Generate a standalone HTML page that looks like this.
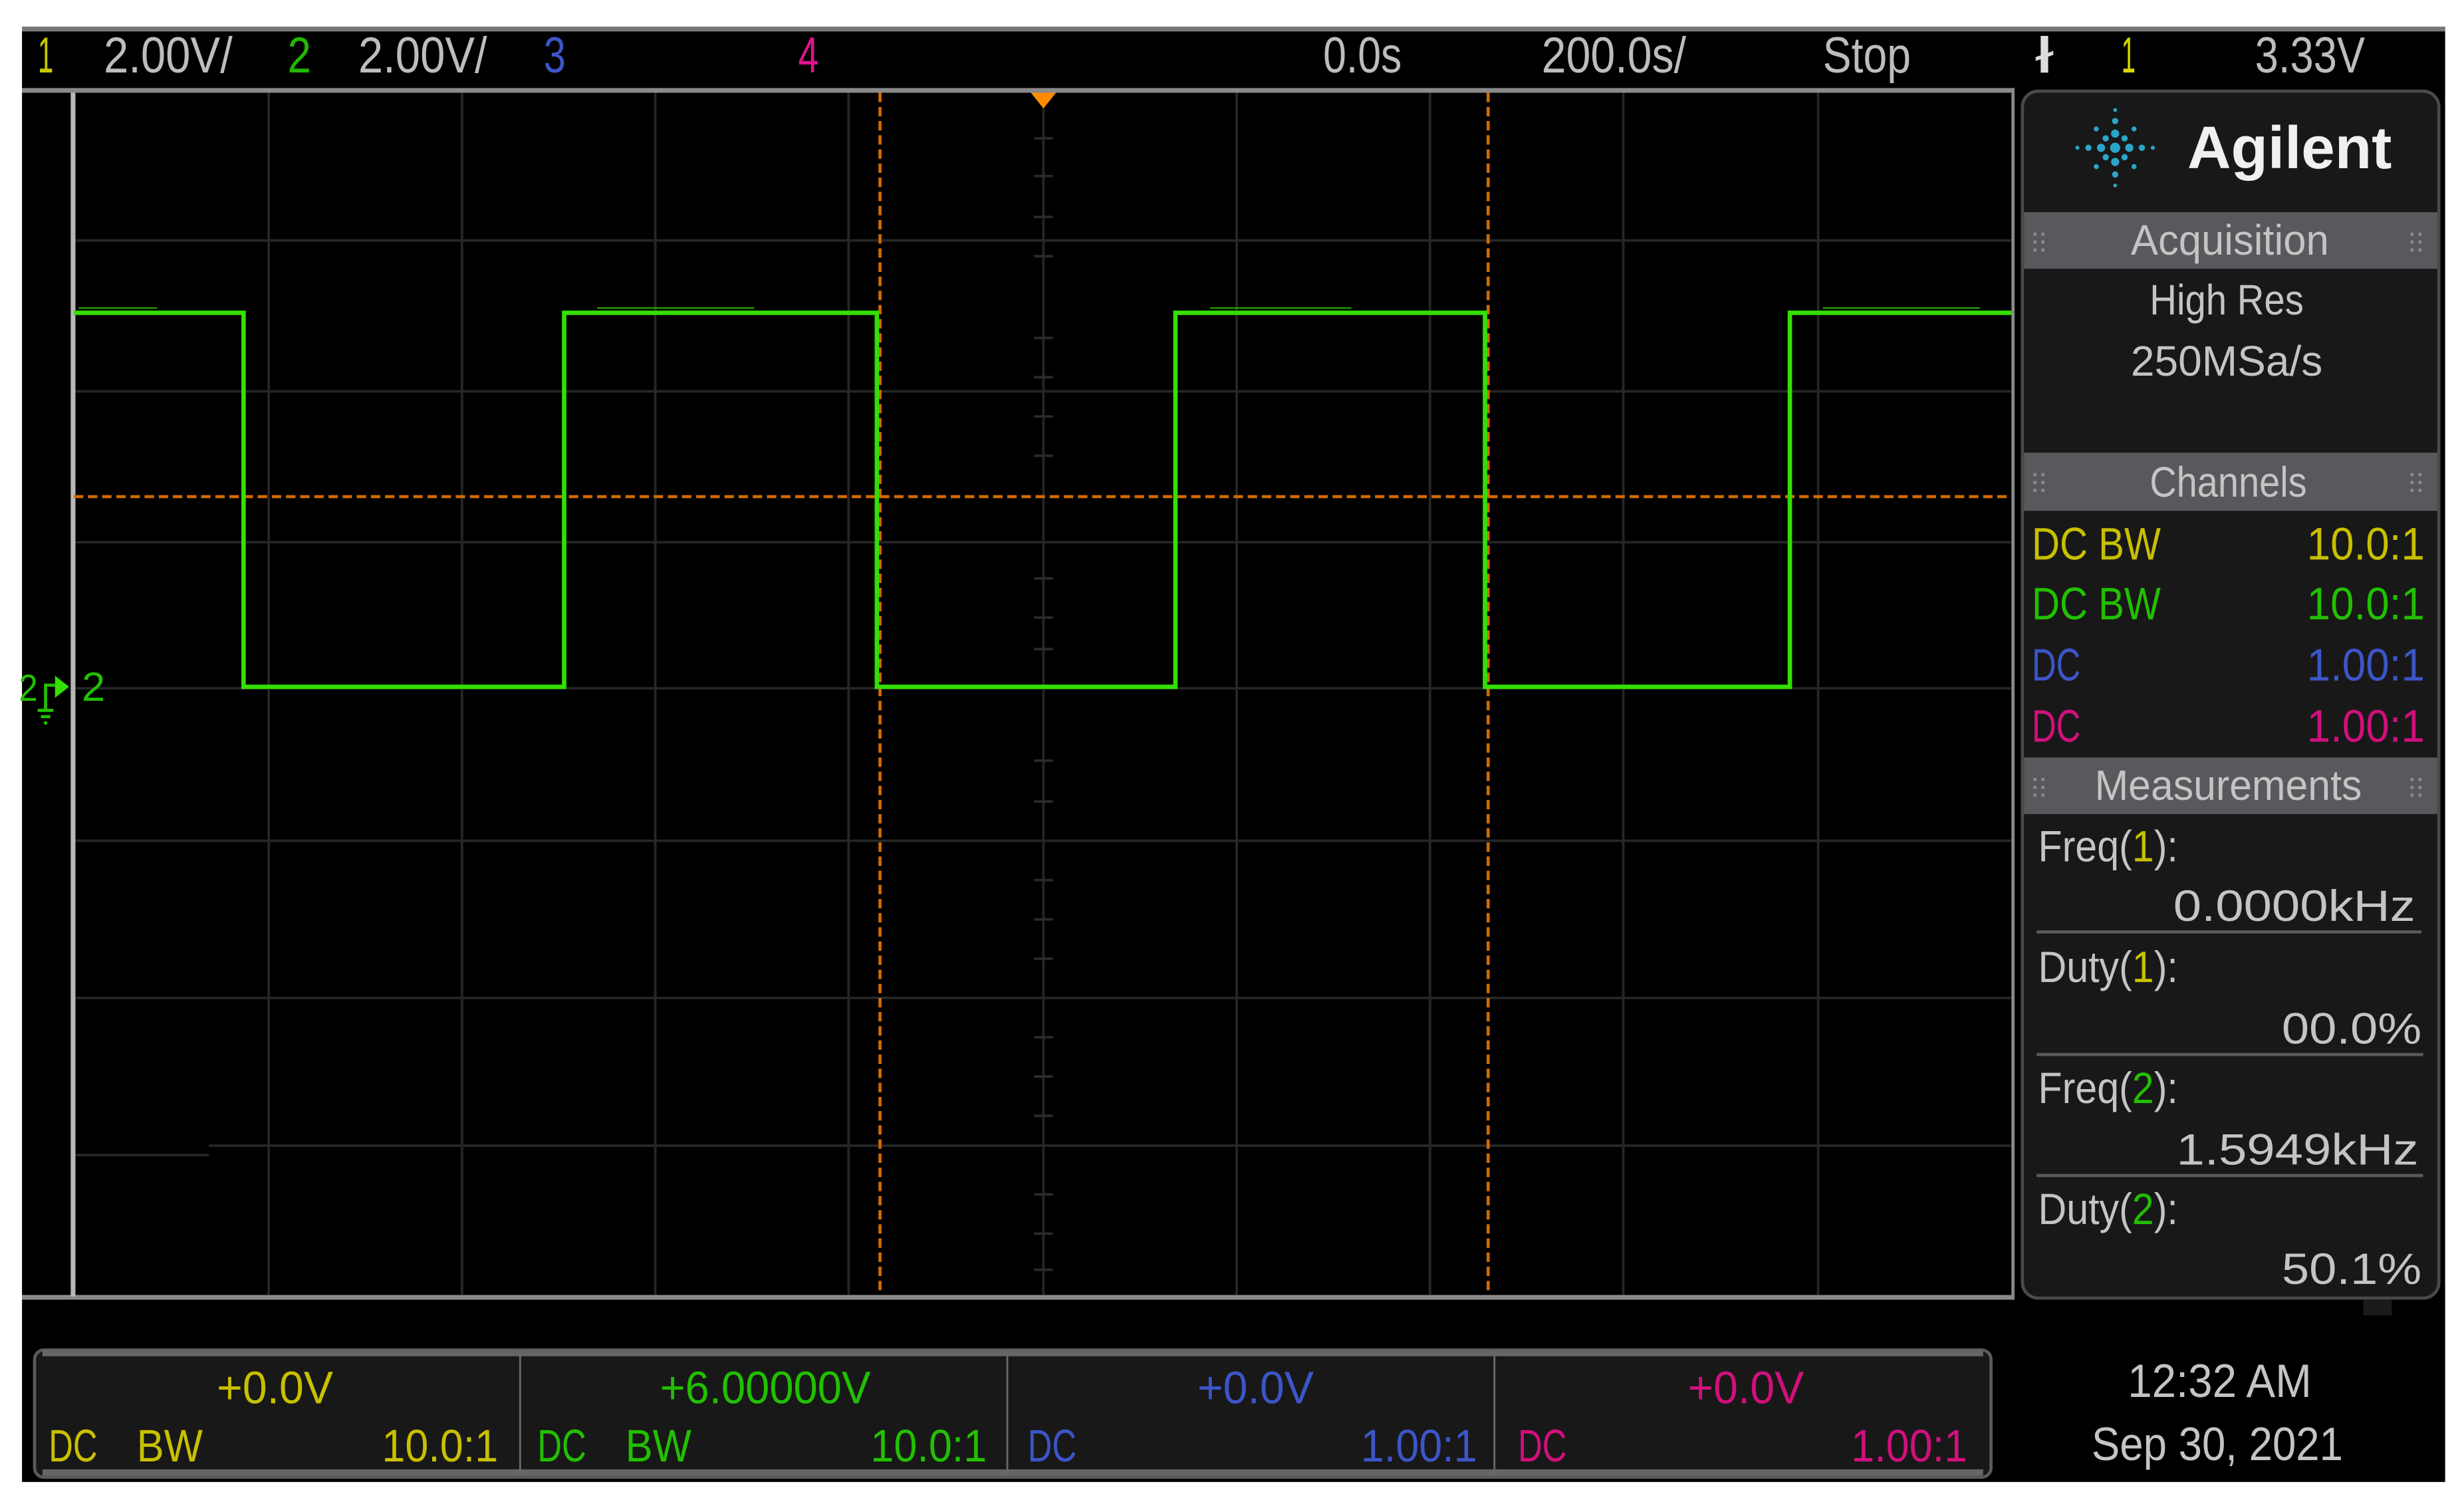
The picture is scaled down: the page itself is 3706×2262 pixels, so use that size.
<!DOCTYPE html>
<html><head><meta charset="utf-8"><style>
html,body{margin:0;padding:0;background:#fff;width:3706px;height:2262px;overflow:hidden}
svg{display:block}
text{font-family:"Liberation Sans",sans-serif}
</style></head><body>
<svg width="3706" height="2262" viewBox="0 0 1568 957" xmlns="http://www.w3.org/2000/svg">
<rect x="0" y="0" width="1568" height="957" fill="#fff"/>
<rect x="14" y="17" width="1542" height="926" fill="#000"/>
<rect x="14" y="17" width="1542" height="3" fill="#7a7a7a"/>
<g font-size="32">
<text x="24" y="46" fill="#c8c800" textLength="10" lengthAdjust="spacingAndGlyphs">1</text>
<text x="66" y="46" fill="#bdbdbd" textLength="82" lengthAdjust="spacingAndGlyphs">2.00V/</text>
<text x="183" y="46" fill="#22b800" textLength="15" lengthAdjust="spacingAndGlyphs">2</text>
<text x="228" y="46" fill="#bdbdbd" textLength="82" lengthAdjust="spacingAndGlyphs">2.00V/</text>
<text x="346" y="46" fill="#3c55c8" textLength="14" lengthAdjust="spacingAndGlyphs">3</text>
<text x="508" y="46" fill="#e0148c" textLength="13" lengthAdjust="spacingAndGlyphs">4</text>
<text x="842" y="46" fill="#bdbdbd" textLength="50" lengthAdjust="spacingAndGlyphs">0.0s</text>
<text x="981" y="46" fill="#bdbdbd" textLength="92" lengthAdjust="spacingAndGlyphs">200.0s/</text>
<text x="1160" y="46" fill="#bdbdbd" textLength="56" lengthAdjust="spacingAndGlyphs">Stop</text>
<text x="1295" y="46" fill="#dddddd" textLength="12" lengthAdjust="spacingAndGlyphs">ł</text>
<text x="1350" y="46" fill="#d8d800" textLength="9" lengthAdjust="spacingAndGlyphs">1</text>
<text x="1435" y="46" fill="#bdbdbd" textLength="70" lengthAdjust="spacingAndGlyphs">3.33V</text>
</g>
<rect x="14" y="56" width="1268" height="3" fill="#8a8a8a"/>
<rect x="14" y="824" width="1268" height="3" fill="#8a8a8a"/>
<rect x="1280" y="56" width="2" height="771" fill="#8a8a8a"/>
<g stroke="#262626" stroke-width="1.6">
<line x1="171" y1="59" x2="171" y2="824"/><line x1="294" y1="59" x2="294" y2="824"/>
<line x1="417" y1="59" x2="417" y2="824"/><line x1="540" y1="59" x2="540" y2="824"/>
<line x1="664" y1="59" x2="664" y2="824"/><line x1="787" y1="59" x2="787" y2="824"/>
<line x1="910" y1="59" x2="910" y2="824"/><line x1="1033" y1="59" x2="1033" y2="824"/>
<line x1="1157" y1="59" x2="1157" y2="824"/>
<line x1="47" y1="153" x2="1280" y2="153"/><line x1="47" y1="249" x2="1280" y2="249"/>
<line x1="47" y1="345" x2="1280" y2="345"/><line x1="47" y1="438" x2="1280" y2="438"/>
<line x1="47" y1="535" x2="1280" y2="535"/><line x1="47" y1="635" x2="1280" y2="635"/>
<line x1="47" y1="735" x2="133" y2="735"/><line x1="133" y1="729" x2="1280" y2="729"/>
</g>
<g stroke="#2a2a2a" stroke-width="1.6">
<path d="M658 88h12M658 112h12M658 138h12M658 163h12M658 215h12M658 240h12M658 265h12M658 290h12M658 368h12M658 393h12M658 413h12M658 484h12M658 510h12M658 560h12M658 585h12M658 610h12M658 660h12M658 685h12M658 710h12M658 760h12M658 785h12M658 808h12"/>
</g>
<rect x="45" y="59" width="3" height="766" fill="#b8b8b8"/>
<g stroke="#d06a00" stroke-width="2" stroke-dasharray="6,3">
<line x1="560" y1="59" x2="560" y2="824"/>
<line x1="947" y1="59" x2="947" y2="824"/>
<line x1="47" y1="316" x2="1280" y2="316"/>
</g>
<polygon points="656,59 672,59 664,69" fill="#ff8c00"/>
<polyline points="47,199 155,199 155,437 359,437 359,199 558,199 558,437 748,437 748,199 945,199 945,437 1139,437 1139,199 1280,199" fill="none" stroke="#33e000" stroke-width="2.8"/>
<g stroke="#33e000" stroke-width="1" opacity="0.7">
<path d="M50 196h50M380 196h100M770 196h90M1160 196h100"/>
</g>
<text x="12" y="446" fill="#22c000" font-size="24" textLength="12" lengthAdjust="spacingAndGlyphs">2</text>
<path d="M29 452v-16h6M24 452h10M26 456h6M28 460h2" stroke="#22c000" stroke-width="2" fill="none"/>
<polygon points="35,430 44,437 35,444" fill="#33e000"/>
<text x="52" y="446" fill="#22c000" font-size="26" textLength="15" lengthAdjust="spacingAndGlyphs">2</text>
<rect x="1287" y="58" width="265" height="768" rx="10" fill="#181818" stroke="#4a4a4a" stroke-width="2"/>
<g fill="#2aa6c8">
<circle cx="1346" cy="94" r="3.2"/><circle cx="1346" cy="85" r="2.6"/><circle cx="1346" cy="103" r="2.6"/><circle cx="1346" cy="77" r="2"/><circle cx="1346" cy="111" r="2"/><circle cx="1346" cy="70" r="1.2"/><circle cx="1346" cy="118" r="1.2"/>
<circle cx="1337" cy="94" r="2.6"/><circle cx="1355" cy="94" r="2.6"/><circle cx="1329" cy="94" r="2"/><circle cx="1363" cy="94" r="2"/><circle cx="1322" cy="94" r="1.3"/><circle cx="1370" cy="94" r="1.3"/>
<circle cx="1340" cy="88" r="2"/><circle cx="1352" cy="88" r="2"/><circle cx="1340" cy="100" r="2"/><circle cx="1352" cy="100" r="2"/>
<circle cx="1334" cy="82" r="1.6"/><circle cx="1358" cy="82" r="1.6"/><circle cx="1334" cy="106" r="1.6"/><circle cx="1358" cy="106" r="1.6"/>
</g>
<text x="1392" y="107" fill="#f0f0f0" font-size="38" font-weight="bold" textLength="130" lengthAdjust="spacingAndGlyphs">Agilent</text>
<rect x="1288" y="135" width="263" height="36" fill="#57595c"/>
<rect x="1288" y="288" width="263" height="37" fill="#57595c"/>
<rect x="1288" y="482" width="263" height="36" fill="#57595c"/>
<g fill="#8a8a8a">
<path d="M1294 148h2v2h-2zM1299 148h2v2h-2zM1294 153h2v2h-2zM1299 153h2v2h-2zM1294 158h2v2h-2zM1299 158h2v2h-2z"/>
<path d="M1534 148h2v2h-2zM1539 148h2v2h-2zM1534 153h2v2h-2zM1539 153h2v2h-2zM1534 158h2v2h-2zM1539 158h2v2h-2z"/>
<path d="M1294 301h2v2h-2zM1299 301h2v2h-2zM1294 306h2v2h-2zM1299 306h2v2h-2zM1294 311h2v2h-2zM1299 311h2v2h-2z"/>
<path d="M1534 301h2v2h-2zM1539 301h2v2h-2zM1534 306h2v2h-2zM1539 306h2v2h-2zM1534 311h2v2h-2zM1539 311h2v2h-2z"/>
<path d="M1294 495h2v2h-2zM1299 495h2v2h-2zM1294 500h2v2h-2zM1299 500h2v2h-2zM1294 505h2v2h-2zM1299 505h2v2h-2z"/>
<path d="M1534 495h2v2h-2zM1539 495h2v2h-2zM1534 500h2v2h-2zM1539 500h2v2h-2zM1534 505h2v2h-2zM1539 505h2v2h-2z"/>
</g>
<g font-size="27" fill="#c4c4c4">
<text x="1356" y="162" textLength="126" lengthAdjust="spacingAndGlyphs">Acquisition</text>
<text x="1368" y="200" textLength="98" lengthAdjust="spacingAndGlyphs">High Res</text>
<text x="1356" y="239" textLength="122" lengthAdjust="spacingAndGlyphs">250MSa/s</text>
<text x="1368" y="316" textLength="100" lengthAdjust="spacingAndGlyphs">Channels</text>
<text x="1333" y="509" textLength="170" lengthAdjust="spacingAndGlyphs">Measurements</text>
</g>
<g font-size="29">
<text x="1293" y="356" fill="#c8c000" textLength="82" lengthAdjust="spacingAndGlyphs">DC BW</text>
<text x="1468" y="356" fill="#c8c000" textLength="75" lengthAdjust="spacingAndGlyphs">10.0:1</text>
<text x="1293" y="394" fill="#22c000" textLength="82" lengthAdjust="spacingAndGlyphs">DC BW</text>
<text x="1468" y="394" fill="#22c000" textLength="75" lengthAdjust="spacingAndGlyphs">10.0:1</text>
<text x="1293" y="433" fill="#3c55c8" textLength="31" lengthAdjust="spacingAndGlyphs">DC</text>
<text x="1468" y="433" fill="#3c55c8" textLength="75" lengthAdjust="spacingAndGlyphs">1.00:1</text>
<text x="1293" y="472" fill="#d0107c" textLength="31" lengthAdjust="spacingAndGlyphs">DC</text>
<text x="1468" y="472" fill="#d0107c" textLength="75" lengthAdjust="spacingAndGlyphs">1.00:1</text>
</g>
<g font-size="28" fill="#c4c4c4">
<text x="1297" y="548" textLength="89" lengthAdjust="spacingAndGlyphs">Freq(<tspan fill="#c8c000">1</tspan>):</text>
<text x="1383" y="586" textLength="154" lengthAdjust="spacingAndGlyphs">0.0000kHz</text>
<text x="1297" y="625" textLength="89" lengthAdjust="spacingAndGlyphs">Duty(<tspan fill="#c8c000">1</tspan>):</text>
<text x="1452" y="664" textLength="89" lengthAdjust="spacingAndGlyphs">00.0%</text>
<text x="1297" y="702" textLength="89" lengthAdjust="spacingAndGlyphs">Freq(<tspan fill="#22c000">2</tspan>):</text>
<text x="1385" y="741" textLength="154" lengthAdjust="spacingAndGlyphs">1.5949kHz</text>
<text x="1297" y="779" textLength="89" lengthAdjust="spacingAndGlyphs">Duty(<tspan fill="#22c000">2</tspan>):</text>
<text x="1452" y="817" textLength="89" lengthAdjust="spacingAndGlyphs">50.1%</text>
</g>
<g fill="#5a5a5a">
<rect x="1296" y="592" width="245" height="2"/>
<rect x="1296" y="670" width="246" height="2"/>
<rect x="1296" y="747" width="246" height="2"/>
</g>
<rect x="1504" y="827" width="18" height="10" fill="#1a1a1a"/>
<rect x="22" y="859" width="1245" height="81" rx="6" fill="#181818" stroke="#5a5a5a" stroke-width="2"/>
<rect x="27" y="859" width="1235" height="4" fill="#666"/>
<rect x="27" y="935" width="1235" height="4" fill="#666"/>
<g stroke="#6a6a6a" stroke-width="1.2">
<line x1="331" y1="860" x2="331" y2="939"/><line x1="641" y1="860" x2="641" y2="939"/><line x1="951" y1="860" x2="951" y2="939"/>
</g>
<g font-size="29">
<text x="138" y="893" fill="#c8c000" textLength="74" lengthAdjust="spacingAndGlyphs">+0.0V</text>
<text x="31" y="930" fill="#c8c000" textLength="31" lengthAdjust="spacingAndGlyphs">DC</text>
<text x="87" y="930" fill="#c8c000" textLength="42" lengthAdjust="spacingAndGlyphs">BW</text>
<text x="243" y="930" fill="#c8c000" textLength="74" lengthAdjust="spacingAndGlyphs">10.0:1</text>
<text x="420" y="893" fill="#22c000" textLength="134" lengthAdjust="spacingAndGlyphs">+6.00000V</text>
<text x="342" y="930" fill="#22c000" textLength="31" lengthAdjust="spacingAndGlyphs">DC</text>
<text x="398" y="930" fill="#22c000" textLength="42" lengthAdjust="spacingAndGlyphs">BW</text>
<text x="554" y="930" fill="#22c000" textLength="74" lengthAdjust="spacingAndGlyphs">10.0:1</text>
<text x="762" y="893" fill="#3c55c8" textLength="74" lengthAdjust="spacingAndGlyphs">+0.0V</text>
<text x="654" y="930" fill="#3c55c8" textLength="31" lengthAdjust="spacingAndGlyphs">DC</text>
<text x="866" y="930" fill="#3c55c8" textLength="74" lengthAdjust="spacingAndGlyphs">1.00:1</text>
<text x="1074" y="893" fill="#d0107c" textLength="74" lengthAdjust="spacingAndGlyphs">+0.0V</text>
<text x="966" y="930" fill="#d0107c" textLength="31" lengthAdjust="spacingAndGlyphs">DC</text>
<text x="1178" y="930" fill="#d0107c" textLength="74" lengthAdjust="spacingAndGlyphs">1.00:1</text>
</g>
<g font-size="30" fill="#c4c4c4">
<text x="1354" y="889" textLength="117" lengthAdjust="spacingAndGlyphs">12:32 AM</text>
<text x="1331" y="929" textLength="160" lengthAdjust="spacingAndGlyphs">Sep 30, 2021</text>
</g>
</svg>
</body></html>
